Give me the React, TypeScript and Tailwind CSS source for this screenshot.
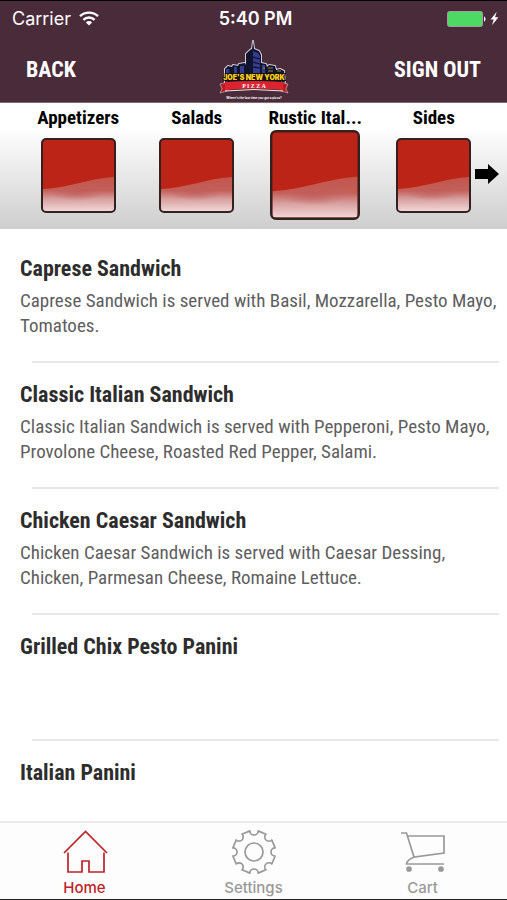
import { useState } from "react";

interface MenuItem {
  name: string;
  description?: string;
}

const categories = ["Appetizers", "Salads", "Rustic Ital...", "Sides"];

const menuItems: MenuItem[] = [
  {
    name: "Caprese Sandwich",
    description: "Caprese Sandwich is served with Basil, Mozzarella, Pesto Mayo, Tomatoes.",
  },
  {
    name: "Classic Italian Sandwich",
    description:
      "Classic Italian Sandwich is served with Pepperoni, Pesto Mayo, Provolone Cheese, Roasted Red Pepper, Salami.",
  },
  {
    name: "Chicken Caesar Sandwich",
    description:
      "Chicken Caesar Sandwich is served with Caesar Dessing, Chicken, Parmesan Cheese, Romaine Lettuce.",
  },
  { name: "Grilled Chix Pesto Panini" },
  { name: "Italian Panini" },
];

function StatusBar() {
  return (
    <div className="grid h-9 grid-cols-3 items-center border-t border-black pl-3 pr-2 font-['Inter',sans-serif] text-lg text-white">
      <div className="flex items-center gap-2">
        <span>Carrier</span>
        <svg width="20" height="15" viewBox="0 0 20 15" fill="none" stroke="#fff" strokeWidth="2.4">
          <path d="M1 5.2a13 13 0 0 1 18 0" />
          <path d="M4.4 8.8a8 8 0 0 1 11.2 0" />
          <path d="M10 14.6 6.9 11.4a4.4 4.4 0 0 1 6.2 0z" fill="#fff" stroke="none" />
        </svg>
      </div>
      <span className="text-center font-semibold">5:40 PM</span>
      <div className="flex items-center justify-end gap-1">
        <svg width="39" height="16" viewBox="0 0 39 16">
          <rect x="0.5" y="0.5" width="35" height="15" rx="2" fill="#4cd964" stroke="#a79ba2" />
          <path d="M37 5.5c2 .6 2 4.4 0 5z" fill="#fff" />
        </svg>
        <svg width="9" height="15" viewBox="0 0 10 15" fill="#fff">
          <path d="M7.5 0 .6 8.6h3.6L2.2 15l7.2-9H5.6z" />
        </svg>
      </div>
    </div>
  );
}

function Logo() {
  return (
    <svg width="70" height="64" viewBox="0 0 70 64">
      {/* skyline */}
      <path
        d="M6 46V32l3-3 4 1 1-2 5 1 1-2 6-1 1 2V17l4-4 2-1 1-8 1 8 5 2 2 4v8l5 1 1 3 2-2 6 1 1 4 4-1 4 2 1 14z"
        fill="#11142f"
        stroke="#d5ccda"
        strokeWidth="2"
        strokeLinejoin="round"
        paintOrder="stroke"
      />
      <path d="M7 32h4v6H7zM15 30h3v8h-3zM21 29h4v8h-4zM34 14l5 2 2 3v18h-7zM43 28h3v8h-3z" fill="#343d8c" />
      <path d="M34 20l7 2M34 25l7 2M34 30l7 1M11 30v9M19 29v9" stroke="#0b0e28" strokeWidth="1.2" />
      <path d="M49 31h5M49 34h5M58 34h4M44 31h2" stroke="#9a8632" strokeWidth="1.2" />
      {/* ribbon */}
      <path d="M1 47l7-2v9l-7 2 2-4zM69 47l-7-2v9l7 2-2-4z" fill="#b81c25" stroke="#eadfe3" strokeWidth="0.5" />
      <path d="M6 45q29-2 58 0v8q-29-3-58 0z" fill="#dc2430" />
      <path d="M6 54q29-3 58 0" fill="none" stroke="#f0e6ea" strokeWidth="1" />
      <text
        x="35"
        y="43"
        textAnchor="middle"
        className="font-['Inter',sans-serif] text-[7px] font-black"
        fill="#ffd21c"
        stroke="#17120a"
        strokeWidth="2"
        paintOrder="stroke"
      >
        JOE'S NEW YORK
      </text>
      <text x="35" y="51" textAnchor="middle" className="font-['Liberation_Serif',serif] text-[6px] font-bold" fill="#fff">
        P I Z Z A
      </text>
      <text x="35" y="62" textAnchor="middle" className="font-['Inter',sans-serif] text-[3px]" fill="#fff">
        Where's the last time you got a pizza?
      </text>
    </svg>
  );
}

function CategoryTile({ id, large }: { id: string; large: boolean }) {
  return (
    <svg className={large ? "size-[90px]" : "size-[75px]"} viewBox="0 0 75 75">
      <defs>
        <linearGradient id={id} x1="0" y1="0" x2="0" y2="1">
          <stop offset="0" stopColor="#c2554b" />
          <stop offset="0.4" stopColor="#c4605a" />
          <stop offset="0.65" stopColor="#d8a09f" />
          <stop offset="1" stopColor="#f1d6d8" />
        </linearGradient>
        <radialGradient id={`${id}-shade`}>
          <stop offset="0" stopColor="#bd5a57" stopOpacity="0.65" />
          <stop offset="1" stopColor="#bd5a57" stopOpacity="0" />
        </radialGradient>
      </defs>
      <rect x="1" y="1" width="73" height="73" rx="4" fill="#bb2416" />
      <path d="M2 51C27 50 45 41 73 39v34H2z" fill={`url(#${id})`} />
      <ellipse cx="36" cy="55" rx="26" ry="8" fill={`url(#${id}-shade)`} />
      <rect x="1" y="1" width="73" height="73" rx="4" fill="none" stroke="#33211f" strokeWidth="2" />
    </svg>
  );
}

function HomeIcon() {
  return (
    <svg width="46" height="44" viewBox="0 0 46 44" fill="none" stroke="currentColor" strokeWidth="1.7">
      <path d="M2 23 23.5 1.5 45 23M6 22.5V42h14V31h7v11h15V22.5" />
    </svg>
  );
}

function SettingsIcon() {
  return (
    <svg width="46" height="44" viewBox="0 0 46 44" fill="none" stroke="currentColor" strokeWidth="1.7" strokeLinejoin="round">
      <path d="M18.9.9A4.1 4.1 0 0 0 27.1.9L35 4.2A4.1 4.1 0 0 0 40.8 10L44.1 17.9A4.1 4.1 0 0 0 44.1 26.1L40.8 34A4.1 4.1 0 0 0 35 39.8L27.1 43.1A4.1 4.1 0 0 0 18.9 43.1L11 39.8A4.1 4.1 0 0 0 5.2 34L1.9 26.1A4.1 4.1 0 0 0 1.9 17.9L5.2 10A4.1 4.1 0 0 0 11 4.2z" />
      <circle cx="23" cy="22" r="9" />
    </svg>
  );
}

function CartIcon() {
  return (
    <svg width="46" height="44" viewBox="0 0 46 44" fill="none" stroke="currentColor" strokeWidth="1.7">
      <path d="M1 3h5.5L14 27l30-4V6H7.5M14 27q-7 3-7.5 7H44" />
      <circle cx="9" cy="39" r="2" fill="currentColor" />
      <circle cx="41" cy="39" r="2" fill="currentColor" />
    </svg>
  );
}

const tabs = [
  { label: "Home", icon: <HomeIcon /> },
  { label: "Settings", icon: <SettingsIcon /> },
  { label: "Cart", icon: <CartIcon /> },
];

export default function App() {
  const [category, setCategory] = useState("Rustic Ital...");
  const [tab, setTab] = useState("Home");

  return (
    <div className="flex h-screen flex-col bg-white font-['Roboto_Condensed','Liberation_Sans_Narrow',sans-serif]">
      <header className="flex-none border-b border-[#7e6b77] bg-[#492b3a]">
        <StatusBar />
        <div className="flex h-[66px] items-center justify-between px-[26px] text-[22px] font-bold text-white">
          <button type="button" className="flex-1 text-left">BACK</button>
          <Logo />
          <button type="button" className="flex-1 text-right">SIGN OUT</button>
        </div>
      </header>

      <nav className="relative grid h-[126px] flex-none grid-cols-4 bg-linear-to-b from-white from-20% to-[#cecece] pl-[19px] pr-[14px]">
        {categories.map((name, i) => (
          <button key={name} type="button" onClick={() => setCategory(name)} className="flex flex-col items-center pt-[3px]">
            <span className="text-[19px] leading-6 font-bold whitespace-nowrap">{name}</span>
            <span className="flex h-[90px] items-center">
              <CategoryTile id={`gloss-${i}`} large={category === name} />
            </span>
          </button>
        ))}
        <button type="button" aria-label="More categories" className="absolute right-2 top-[61px]">
          <svg width="24" height="20" viewBox="0 0 24 20">
            <path d="M0 5h13V0l11 10-11 10v-5H0z" />
          </svg>
        </button>
      </nav>

      <ul className="min-h-0 flex-1 overflow-hidden pt-2">
        {menuItems.map((item) => (
          <li key={item.name} className="flex h-[126px] flex-col pl-5 pr-2">
            <h2 className="pt-4 text-[22px] leading-8 font-bold text-[#2d2d2d]">{item.name}</h2>
            <p className="pt-[3px] text-[19px] leading-[25px] text-[#5e5e5e]">{item.description}</p>
            <div className="mt-auto ml-3 border-b-2 border-[#e8e8e8]" />
          </li>
        ))}
      </ul>

      <footer className="grid flex-none grid-cols-3 border-t-2 border-b border-t-[#ebebeb] border-b-[#222] bg-[#fdfdfd] font-['Inter',sans-serif]">
        {tabs.map(({ label, icon }) => (
          <button
            key={label}
            type="button"
            onClick={() => setTab(label)}
            className={`flex h-[76px] flex-col items-center gap-[3px] pt-[7px] text-[15px] leading-[22px] font-medium ${tab === label ? "text-[#bf2328]" : "text-[#999]"}`}
          >
            {icon}
            <span>{label}</span>
          </button>
        ))}
      </footer>
    </div>
  );
}
